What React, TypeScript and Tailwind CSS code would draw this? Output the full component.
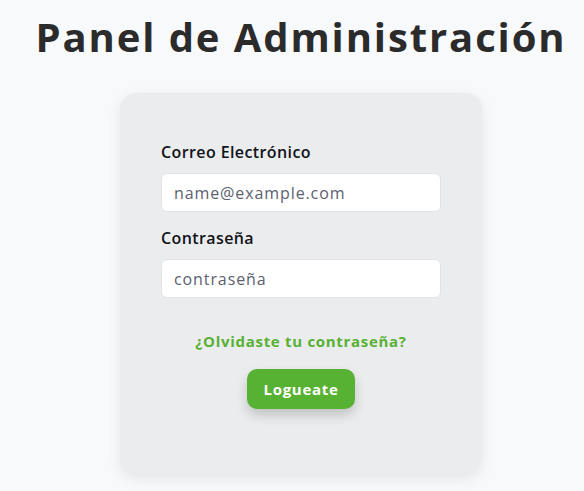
import React from "react";

export default function App() {
  return (
    <div
      className="min-h-screen w-full bg-[#f8f9fb] flex flex-col items-center pl-[18px]"
      style={{ fontFamily: '"Open Sans", "Noto Sans", sans-serif' }}
    >
      <h1 className="mt-[9px] text-[40px] leading-[56px] font-bold tracking-[1.9px] text-[#2b2b2b] whitespace-nowrap">
        Panel de Administración
      </h1>
      <div className="mt-[28px] w-[362px] h-[382px] rounded-[16px] bg-[#ebecee] shadow-[0_4px_14px_rgba(0,0,0,0.08)] px-[41px] pt-[47px] flex flex-col">
        <label className="block text-[16px] leading-[24px] font-semibold tracking-[0.4px] text-[#111318]">
          Correo Electrónico
        </label>
        <input
          type="email"
          placeholder="name@example.com"
          className="mt-[9px] w-[280px] h-[39px] rounded-[6px] bg-white border border-[#e2e3e6] px-[12px] text-[16px] tracking-[0.9px] text-[#111318] placeholder:text-[#5c6170] outline-none"
        />
        <label className="mt-[14px] block text-[16px] leading-[24px] font-semibold tracking-[0.4px] text-[#111318]">
          Contraseña
        </label>
        <input
          type="password"
          placeholder="contraseña"
          className="mt-[9px] w-[280px] h-[39px] rounded-[6px] bg-white border border-[#e2e3e6] px-[12px] text-[16px] tracking-[0.9px] text-[#111318] placeholder:text-[#5c6170] outline-none"
        />
        <div className="mt-[32px] flex flex-col items-center">
          <a href="#" className="text-[15px] leading-[22px] font-bold tracking-[0.7px] text-[#57b133]">
            ¿Olvidaste tu contraseña?
          </a>
          <button className="mt-[17px] w-[108px] h-[40px] rounded-[10px] bg-[#57b133] text-white text-[15px] font-bold tracking-[0.7px] shadow-[0_6px_12px_rgba(0,0,0,0.18)]">
            Logueate
          </button>
        </div>
      </div>
    </div>
  );
}
